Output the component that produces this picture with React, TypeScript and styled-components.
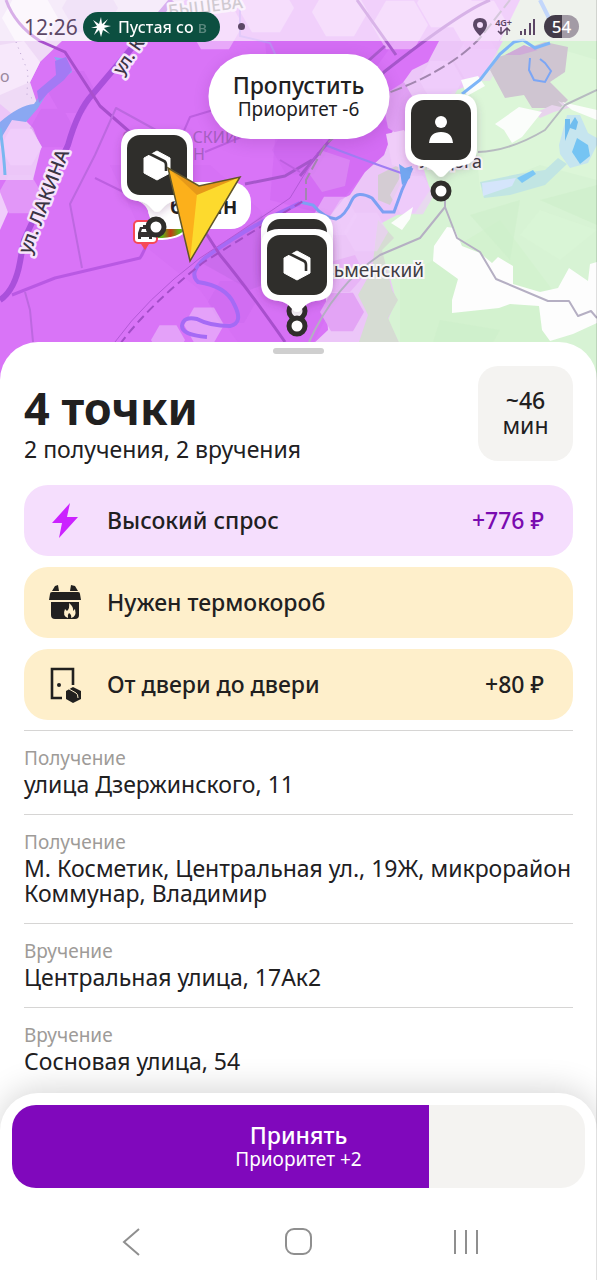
import React from "react";
import styled, { createGlobalStyle } from "styled-components";

const GlobalStyle = createGlobalStyle`
  * { box-sizing: border-box; }
  body { margin: 0; background: #fff; font-family: "Noto Sans", "Open Sans", sans-serif; color: #21201f; }
  button { font-family: inherit; color: inherit; border: 0; padding: 0; cursor: pointer; }
  h1, h2, p, ul, dl, dd { margin: 0; padding: 0; }
`;

const Page = styled.div`
  position: relative;
  display: flex;
  flex-direction: column;
  min-height: 100vh;
  background: #fff;

  &::after {
    content: "";
    position: absolute;
    inset: 0 0 0 auto;
    width: 1px;
    background: rgba(0, 0, 0, 0.12);
  }
`;

const MapArea = styled.header`
  position: relative;
  height: 384px;
  overflow: hidden;
  background: #d7f3d4;
`;

const MapCanvas = styled.svg`
  display: block;
  width: 100%;
  height: 100%;
  font-family: "Noto Sans", sans-serif;
`;

const StatusBar = styled.div`
  position: absolute;
  inset: 0 0 auto 0;
  height: 41px;
  display: flex;
  align-items: center;
  padding: 12px 18px 0 24px;
  background: rgba(255, 255, 255, 0.55);
  color: #5c4766;
`;

const Clock = styled.time`
  font-size: 21px;
  line-height: 28px;
  width: 59px;
  white-space: nowrap;
`;

const RidePill = styled.div`
  display: flex;
  align-items: center;
  gap: 7px;
  width: 137px;
  height: 30px;
  padding: 0 8px;
  border-radius: 15px;
  background: #0c4f40;
  color: #fff;
  font-size: 16px;
  font-weight: 500;
  white-space: nowrap;
`;

const PillText = styled.span`
  background: linear-gradient(to right, #fff 86%, #5b877d 88%);
  background-clip: text;
  color: transparent;
`;

const Dot = styled.span`
  width: 7px;
  height: 7px;
  margin-left: 18px;
  border-radius: 50%;
  background: #5c4766;
`;

const StatusIcons = styled.div`
  display: flex;
  align-items: center;
  gap: 8px;
  margin-left: auto;
`;

const Network = styled.span`
  display: flex;
  flex-direction: column;
  align-items: center;
  font-size: 9px;
  font-weight: 600;
  line-height: 9px;
`;

const Battery = styled.span`
  width: 35px;
  height: 23px;
  border-radius: 12px;
  background: linear-gradient(to right, #433c49 52%, #a29ba5 52%);
  color: #fff;
  font-size: 17px;
  font-weight: 500;
  line-height: 23px;
  text-align: center;
`;

const SkipButton = styled.button`
  position: absolute;
  top: 54px;
  left: 50%;
  transform: translateX(-50%);
  width: 181px;
  height: 85px;
  border-radius: 42px;
  background: #fff;
  box-shadow: 0 4px 16px rgba(80, 20, 100, 0.16);
`;

const ButtonTitle = styled.span`
  display: block;
  font-size: 23px;
  font-weight: 500;
  line-height: 25px;
`;

const ButtonNote = styled.span`
  display: block;
  font-size: 19px;
  line-height: 22px;
`;

const Sheet = styled.main`
  position: relative;
  flex: 1;
  margin-top: -42px;
  padding: 6px 24px 0;
  border-radius: 38px 38px 0 0;
  background: #fff;
`;

const Handle = styled.div`
  width: 51px;
  height: 6px;
  margin: 0 auto;
  border-radius: 3px;
  background: #cfcfcf;
`;

const Summary = styled.section`
  display: flex;
  justify-content: space-between;
  margin-top: 12px;
  height: 95px;
`;

const Title = styled.h1`
  padding-top: 15px;
  font-size: 45px;
  font-weight: 700;
  line-height: 54px;
`;

const Subtitle = styled.p`
  font-size: 23px;
  line-height: 28px;
`;

const TimeBox = styled.div`
  width: 95px;
  height: 95px;
  padding-top: 22px;
  border-radius: 20px;
  background: #f4f3f1;
  font-size: 23px;
  line-height: 25px;
  text-align: center;
`;

const Minutes = styled.div`
  font-weight: 500;
`;

const Banners = styled.ul`
  display: flex;
  flex-direction: column;
  gap: 11px;
  margin-top: 24px;
  list-style: none;
`;

const Banner = styled.li<{ $tone: "demand" | "notice" }>`
  display: flex;
  align-items: center;
  height: 71px;
  padding: 0 29px 2px 24px;
  border-radius: 24px;
  background: ${(p) => (p.$tone === "demand" ? "#f5defd" : "#feefcb")};
  font-size: 23px;
  font-weight: 500;
`;

const BannerIcon = styled.svg`
  width: 34px;
  height: 38px;
  margin-right: 25px;
`;

const Bonus = styled.span<{ $accent?: boolean }>`
  margin-left: auto;
  color: ${(p) => (p.$accent ? "#7a0bb0" : "inherit")};
`;

const Stops = styled.dl`
  margin-top: 10px;
`;

const Stop = styled.div`
  border-top: 1px solid #d6d5d4;
  padding: 14px 0 17px;
`;

const StopKind = styled.dt`
  color: #9e9b98;
  font-size: 19px;
  line-height: 27px;
`;

const StopAddress = styled.dd`
  font-size: 23px;
  line-height: 25px;
`;

const Footer = styled.footer`
  position: sticky;
  bottom: 0;
  padding: 12px 12px 0;
  border-radius: 38px 38px 0 0;
  background: #fff;
  box-shadow: 0 -4px 32px rgba(0, 0, 0, 0.16);
`;

const AcceptButton = styled.button<{ $progress: number }>`
  width: 100%;
  height: 83px;
  border-radius: 24px;
  background: linear-gradient(to right, #8008bc ${(p) => p.$progress}%, #f4f3f1 ${(p) => p.$progress}%);
  && { color: #fff; }
`;

const SystemNav = styled.nav`
  display: flex;
  justify-content: space-between;
  align-items: center;
  height: 92px;
  padding: 16px 104px 0;
`;

const NavButton = styled.button`
  display: flex;
  width: 32px;
  height: 32px;
  background: none;
`;

const hex = (x: number, y: number, r = 30) =>
  [
    [x - r, y],
    [x - r / 2, y - r * 0.87],
    [x + r / 2, y - r * 0.87],
    [x + r, y],
    [x + r / 2, y + r * 0.87],
    [x - r / 2, y + r * 0.87],
  ]
    .map((p) => p.join(","))
    .join(" ");

const Parcel = ({ x, y }: { x: number; y: number }) => (
  <g transform={`translate(${x} ${y})`}>
    <path d="M-13 -7L0 -14L13 -7V8L0 15L-13 8Z" fill="#fff" stroke="#fff" strokeWidth="1" strokeLinejoin="round" />
    <path d="M-9 -12L7 -4Q9 -3 9 0V6" fill="none" stroke="#2f2e2b" strokeWidth="2.6" />
  </g>
);

const Pin = ({ x, y }: { x: number; y: number }) => (
  <g transform={`translate(${x} ${y})`}>
    <path
      d="M-18 -36H18Q36 -36 36 -18V18Q36 35 18 36Q10 37 4 45Q0 49 -4 45Q-10 37 -18 36Q-36 35 -36 18V-18Q-36 -36 -18 -36Z"
      fill="#fff"
      filter="url(#pinShadow)"
    />
    <rect x="-30" y="-30" width="60" height="60" rx="13" fill="#2f2e2b" />
  </g>
);

const MapDrawing = () => (
  <MapCanvas viewBox="0 0 597 384" preserveAspectRatio="xMidYMin slice" role="img" aria-label="Карта">
    <defs>
      <filter id="pinShadow" x="-30%" y="-30%" width="160%" height="160%">
        <feDropShadow dx="0" dy="3" stdDeviation="4" floodColor="#401050" floodOpacity="0.2" />
      </filter>
      <linearGradient id="traffic" x1="0" x2="1">
        <stop offset="0.3" stopColor="#5cb518" />
        <stop offset="0.55" stopColor="#c33a12" />
        <stop offset="0.8" stopColor="#5cb518" />
      </linearGradient>
    </defs>

    <rect width="597" height="384" fill="#d7f3d4" />
    <path d="M480 190L540 165L597 180V60L530 40L470 80Z" fill="#dcf6d8" />
    <path d="M400 280L500 220L560 300L540 384H400Z" fill="#d3f2cf" />
    <path d="M470 215L520 200L510 260ZM540 200L597 185V225ZM440 320L500 330L470 384H420Z" fill="#cdefca" opacity="0.6" />

    <path d="M0 0H497L510 28L498 50L482 78L462 88L452 92L425 125L415 140L430 190L415 213L397 215L378 225L375 245L388 270L396 300L388 320L400 345V384H0Z" fill="#ecc6f8" />
    <path d="M378 220L394 238L382 250L392 290L398 300L388 318L400 345L392 384H350L358 345L368 315L358 295L372 270Z" fill="#d6dcd3" />
    <path d="M378 175L398 165L400 185L390 205L378 200Z" fill="#d4ccd3" />

    <path d="M40 41L62 41L439 41L428 62L412 70L402 84L390 92L386 110L393 130L384 155L365 172L350 195L340 200L330 216L325 285L328 330L312 345V384H0V180L33 180L41 148L33 128L20 115L30 82L40 62Z" fill="#d974f7" />
    <path d="M265 41L395 41L360 90L393 130L384 155L365 172L330 216L270 200L275 140Z" fill="#ce65f0" opacity="0.4" />
    <path d="M110 165L210 165L260 210L300 290L330 310L312 345H240L200 290L150 250Z" fill="#cf69f0" opacity="0.25" />
    <path d="M200 262L262 215L275 280L250 290Z" fill="#bb66e0" opacity="0.4" />
    <g fill="#c764ea" opacity="0.3">
      <polygon points={hex(72, 92, 24)} />
      <polygon points={hex(52, 128, 22)} />
      <polygon points={hex(300, 150, 28)} />
      <polygon points={hex(232, 302, 24)} />
    </g>
    <g fill="#f0cdfb">
      <polygon points={hex(21, 147, 21)} />
      <polygon points={hex(20, 194, 22)} opacity="0.4" />
      <polygon points="0,192 8,212 0,230" />
      <polygon points={hex(441, 80, 22)} opacity="0.8" />
      <polygon points={hex(478, 60, 24)} opacity="0.5" />
      <polygon points={hex(335, 216, 22)} opacity="0.55" />
      <polygon points={hex(366, 232, 22)} opacity="0.6" />
      <polygon points={hex(412, 195, 22)} opacity="0.7" />
      <polygon points={hex(204, 325, 20)} opacity="0.5" />
      <polygon points={hex(168, 340, 17)} opacity="0.5" />
    </g>
    <path d="M388 92L404 82L420 110L404 138L388 128L384 108Z" fill="#e0a0f3" />
    <path d="M386 134L404 130L420 155L415 172L392 165Z" fill="#f0cdf9" />
    <path d="M320 150L350 160L345 186L322 192L308 172Z" fill="#dd92f3" opacity="0.6" />
    <polygon points={hex(342, 312, 22)} fill="#e3a4f5" />
    <path d="M330 262L355 255L365 275L350 292H330Z" fill="#e8b5f6" />
    <path d="M0 0H185L150 41H0Z" fill="#ead5f4" />
    <polygon points={hex(30, 18, 28)} fill="#fbf4fd" opacity="0.8" />
    <polygon points={hex(90, 8, 28)} fill="#ddb8ee" opacity="0.7" />
    <path d="M0 41H62L40 62L30 82L37 103L17 118L0 104Z" fill="#efdaf6" />
    <path d="M0 45L24 41L40 62L30 82L0 95Z" fill="#f7e8fb" />
    <path d="M185 0H520V41H150Z" fill="#e098f7" />
    <g fill="#f0c6fb" opacity="0.65">
      <polygon points={hex(215, 25, 28)} />
      <polygon points={hex(266, 8, 28)} />
      <polygon points={hex(340, 12, 28)} />
      <polygon points={hex(400, 25, 28)} />
      <polygon points={hex(445, 3, 28)} />
      <polygon points={hex(480, 25, 28)} />
    </g>
    <path d="M520 0H597V41H500Z" fill="#d9e3d6" />

    <path d="M498 57L522 50L545 42L568 47L565 72L550 82L568 100L560 108H532L524 95L505 98L490 70Z" fill="#cfc5d1" />
    <path d="M505 55L524 45L538 50L520 55Z" fill="#cfabd8" />
    <path d="M461 80L478 76L485 86L467 96Z" fill="#fbfdfb" />
    <path d="M535 113L552 105L565 108L558 101L572 107L554 112L540 118Z" fill="#e8d4ed" />
    <path d="M495 124L519 107L542 112L522 137L512 143L504 130Z" fill="#fbfdfb" />
    <path d="M562 102L597 110V120L572 110Z" fill="#fbfdfb" />
    <path d="M391 223L413 207L410 219L402 230Z" fill="#fbfdfb" />
    <path d="M447 227L454 228L462 246L480 253L492 263L498 257L513 266V284L540 292L558 288L569 268L588 281L590 264L597 262V323L573 334L550 341L542 330L539 306L510 304L499 308L452 313V300L458 279L433 261L434 246Z" fill="#fdfdfd" />
    <path d="M597 230L540 210L520 235L560 260Z" fill="#daf5d6" opacity="0.8" />

    <g fill="none" stroke="#7ba6f5" strokeWidth="3">
      <path d="M462 94L480 80L500 54L514 42L523 40L535 48L550 43" stroke="#7db5f8" />
      <path d="M540 0L550 20" strokeWidth="4" />
      <path d="M530 58L529 70L534 80L545 82L551 71L545 63L540 59" strokeWidth="2" />
      <path d="M412 168L402 190L394 212H383L372 198Q357 190 352 200Q345 216 336 219Q324 218 313 205L300 202" stroke="#7da0f3" />
      <path d="M325 145Q358 158 404 174" stroke="#a07df3" strokeWidth="2" />
      <path d="M240 0V36L270 43L278 60" stroke="#bf8bf3" strokeWidth="2" />
    </g>
    <g fill="none" stroke="#a56af5" strokeWidth="4">
      <path d="M300 203Q245 228 205 258Q188 273 198 282Q226 286 234 304Q244 323 230 326Q210 326 197 319Q183 316 182 326Q182 335 207 337" />
    </g>
    <path d="M0 122Q20 105 34 104L46 87L64 72L54 57L66 59L72 72L66 76L50 88L38 108L26 122L12 120L0 140Z" fill="#8aa8f2" />
    <path d="M66 57L72 70L64 80L48 93L39 103L37 91L56 75L55 61Z" fill="#a37af4" />
    <path d="M0 128Q4 155 5 175" fill="none" stroke="#79b7f0" strokeWidth="3" />
    <path d="M399 164L405 168L412 166L410 178L402 185Z" fill="#73a6f0" />

    <path d="M559 145L567 115L580 115L588 133L597 138V145L588 163L570 168L560 154Z" fill="#c6e5ef" />
    <path d="M565 119H570V125L575 117L578 122L576 130L570 128L565 141Z" fill="#70bdef" />
    <path d="M577 138L588 145L590 156L580 164L572 152Z" fill="#75c4f3" />
    <path d="M480 182L518 174L545 170L558 158L567 164L545 185L510 195L484 198Z" fill="#c1e5e3" />
    <path d="M482 183L516 178L512 186L483 196Z" fill="#d5e5fb" />
    <path d="M517 178L533 170L536 174L522 183Z" fill="#7cc7f5" />

    <g fill="none" strokeLinejoin="round">
      <path d="M0 300Q15 290 20 262L24 240Q45 195 68 145Q78 110 92 95L130 50L172 0" stroke="#aa50db" strokeWidth="6" />
      <path d="M6 0Q15 25 40 41L65 52L100 106L155 154L220 255Q245 285 285 342" stroke="#a84fcd" strokeWidth="3" />
      <path d="M12 295L55 278L140 258Q149 245 149 225" stroke="#b959e3" strokeWidth="3" />
      <path d="M82 268L70 204L95 155L116 108L165 135M25 292L30 310L33 342" stroke="#bd68e0" strokeWidth="2" />
      <path d="M300 176L330 140L384 72Q460 12 490 0M245 184L285 176L312 160" stroke="#a656cb" strokeWidth="3" />
      <path d="M357 0L396 55M358 70L385 46" stroke="#aa5acd" strokeWidth="3" />
      <path d="M280 160L300 172M180 140L190 117L240 102M205 152L270 125M95 178L160 210" stroke="#bd5fe0" strokeWidth="2" />
      <path d="M115 342Q145 300 200 258Q255 222 290 198L318 152" stroke="#b359d7" strokeWidth="1" />
      <path d="M120 344Q150 304 204 262Q255 230 305 200" stroke="#a34dc8" strokeWidth="2" strokeDasharray="9 5" />
      <path d="M306 200V180L325 145L388 93Q450 70 480 38L510 0" stroke="#a286af" strokeWidth="2" strokeDasharray="12 4" />
      <path d="M478 152Q510 151 545 130L565 105L597 90" stroke="#b7bbc0" strokeWidth="2" />
      <path d="M445 190V207L420 238L380 255Q335 285 309 342M445 207L457 238L480 252L496 279L548 301H569L578 316L591 311L597 318" stroke="#b5afc3" strokeWidth="2" />
      <path d="M16 42L28 72L27 95L38 102" stroke="#b8a1cf" strokeWidth="1" strokeDasharray="1 5" />
    </g>

    <g fontSize="18" fontWeight="500" fill="#3b3444" stroke="#f6e4fb" strokeWidth="5" paintOrder="stroke" strokeLinejoin="round">
      <text transform="translate(30 255) rotate(-69)" fontSize="19">ул. ЛАКИНА</text>
      <text transform="translate(122 76) rotate(-55)">ул. К</text>
      <text transform="translate(169 17) rotate(-7)" fontSize="17" fill="#978999">БЫШЕВА</text>
    </g>
    <g fill="#a65fc2" fontSize="16">
      <text x="237" y="143" textAnchor="end">ОКТЯБРЬСКИЙ</text>
      <text x="205" y="160" textAnchor="end">РАЙОН</text>
      <text x="0" y="82" fill="#9b889f">о</text>
    </g>
    <g fontSize="19" fill="#403c43" stroke="#f8f6f8" strokeWidth="4" paintOrder="stroke" textAnchor="end">
      <text x="424" y="277">Кузьменский</text>
      <text x="482" y="168" fontSize="18">Ладога</text>
    </g>

    <path d="M152 239Q180 240 186 229L165 225Z" fill="url(#traffic)" stroke="#fff" strokeWidth="2" />
    <rect x="134" y="221" width="23" height="22" rx="4" fill="#fff" stroke="#f64956" strokeWidth="2" />
    <path d="M141 244L145 250L149 244Z" fill="#f64956" />
    <path d="M138 239V233L140 227H150L152 233V239H149V237H141V239ZM142 229L141 232H149L148 229ZM143 225H147V227H143Z" fill="#35302f" fillRule="evenodd" />

    <rect x="148" y="182" width="103" height="47" rx="20" fill="#fff" />
    <text x="170" y="214" fontSize="23" fontWeight="600" fill="#21201f">6 мин</text>
    <path d="M130 199Q146 201 149 214L156 222L165 200H180L180 185H140Z" fill="#fff" />
    <Pin x={157} y={165} />
    <Parcel x={157} y={165} />
    <Pin x={441} y={130} />
    <circle cx="441" cy="122" r="6" fill="#fff" />
    <path d="M429 143Q430 132 441 132Q452 132 453 143Z" fill="#fff" />
    <Pin x={297} y={249} />
    <g fill="#fff" stroke="#2f2e2b" strokeWidth="5">
      <circle cx="156" cy="227" r="8" />
      <circle cx="441" cy="191" r="8" />
      <circle cx="297" cy="311" r="8" />
      <circle cx="297" cy="326" r="8" />
    </g>
    <Pin x={297} y={265} />
    <Parcel x={297} y={265} />

    <path d="M168 168L199 186L240 177L190 261Z" fill="#fdda2d" />
    <path d="M168 168L197 194L190 261Z" fill="#fcb01b" />
    <path d="M168 168L199 186L240 177L197 195Z" fill="#e69919" />
    <path d="M168 168L199 186L240 177L190 261Z" fill="none" stroke="#615629" strokeWidth="1.5" />
  </MapCanvas>
);

const ServiceStar = () => (
  <svg width="20" height="20" viewBox="0 0 20 20" aria-hidden="true">
    <path d="M10 0L11 7L17 2L13 8L20 9L13 11L19 17L12 13L10 20L8 13L3 18L6 11L0 11L6 9L2 3L8 7Z" fill="#fff" />
  </svg>
);

const BoltIcon = () => (
  <BannerIcon viewBox="0 0 34 38" aria-hidden="true">
    <path d="M22 2L4 22H14L11 37L30 16H19Z" fill="#cb22ff" />
  </BannerIcon>
);

const ThermoIcon = () => (
  <BannerIcon viewBox="0 0 34 38" aria-hidden="true">
    <path d="M4 8L7 3L10 2L11 8ZM23 2L27 3L30 8H22Z" fill="#21201f" />
    <path d="M4 9H30Q32 9 32 11L33 17H1L2 11Q2 9 4 9Z" fill="#21201f" />
    <path d="M3 19H31V32Q31 36 27 36H7Q3 36 3 32Z" fill="#21201f" />
    <path d="M21 20Q26 24 25 28L27 26Q29 34 23 35Q24 32 21 30Q19 32 20 35Q14 33 17 26L19 28Q22 25 21 20Z" fill="#feefcb" />
  </BannerIcon>
);

const DoorIcon = () => (
  <BannerIcon viewBox="0 0 34 38" aria-hidden="true">
    <path d="M25 20V4H4V33H14" fill="none" stroke="#21201f" strokeWidth="2.6" />
    <circle cx="11" cy="20" r="2" fill="#21201f" />
    <path d="M18 26L25 22L33 26V34L25 38L18 34Z" fill="#21201f" />
    <path d="M21 24L28 28Q30 29 30 33" fill="none" stroke="#feefcb" strokeWidth="1" />
  </BannerIcon>
);

const stops = [
  { kind: "Получение", address: "улица Дзержинского, 11" },
  { kind: "Получение", address: "М. Косметик, Центральная ул., 19Ж, микрорайон Коммунар, Владимир" },
  { kind: "Вручение", address: "Центральная улица, 17Ак2" },
  { kind: "Вручение", address: "Сосновая улица, 54" },
];

export default function App() {
  return (
    <Page>
      <GlobalStyle />
      <MapArea>
        <MapDrawing />
        <StatusBar>
          <Clock>12:26</Clock>
          <RidePill>
            <ServiceStar />
            <PillText>Пустая со в</PillText>
          </RidePill>
          <Dot />
          <StatusIcons>
            <svg width="14" height="18" viewBox="0 0 14 18" aria-hidden="true">
              <path d="M7 0Q14 0 14 7Q14 11 7 18Q0 11 0 7Q0 0 7 0ZM7 4A3 3 0 1 0 7 10A3 3 0 1 0 7 4Z" fill="#5c4766" fillRule="evenodd" />
            </svg>
            <Network>
              4G+
              <svg width="14" height="8" viewBox="0 0 14 8" aria-hidden="true">
                <path d="M4 0V7M1 4L4 7L7 4M10 8V1M7 4L10 1L13 4" fill="none" stroke="#5c4766" strokeWidth="1.5" />
              </svg>
            </Network>
            <svg width="16" height="16" viewBox="0 0 16 16" aria-hidden="true">
              <path d="M1 12V16M5 10V16M10 4V16M14 0V16" stroke="#5c4766" strokeWidth="2" />
            </svg>
            <Battery>54</Battery>
          </StatusIcons>
        </StatusBar>
        <SkipButton type="button">
          <ButtonTitle>Пропустить</ButtonTitle>
          <ButtonNote>Приоритет -6</ButtonNote>
        </SkipButton>
      </MapArea>

      <Sheet>
        <Handle />
        <Summary>
          <div>
            <Title>4 точки</Title>
            <Subtitle>2 получения, 2 вручения</Subtitle>
          </div>
          <TimeBox>
            <Minutes>~46</Minutes>
            мин
          </TimeBox>
        </Summary>

        <Banners>
          <Banner $tone="demand">
            <BoltIcon />
            Высокий спрос
            <Bonus $accent>+776 ₽</Bonus>
          </Banner>
          <Banner $tone="notice">
            <ThermoIcon />
            Нужен термокороб
          </Banner>
          <Banner $tone="notice">
            <DoorIcon />
            От двери до двери
            <Bonus>+80 ₽</Bonus>
          </Banner>
        </Banners>

        <Stops>
          {stops.map((stop) => (
            <Stop key={stop.address}>
              <StopKind>{stop.kind}</StopKind>
              <StopAddress>{stop.address}</StopAddress>
            </Stop>
          ))}
        </Stops>
      </Sheet>

      <Footer>
        <AcceptButton type="button" $progress={72.7}>
          <ButtonTitle>Принять</ButtonTitle>
          <ButtonNote>Приоритет +2</ButtonNote>
        </AcceptButton>
        <SystemNav>
          <NavButton type="button" aria-label="Назад">
            <svg width="32" height="32" viewBox="0 0 32 32">
              <path d="M23 3L8 16L23 29" fill="none" stroke="#8f8f8f" strokeWidth="2" />
            </svg>
          </NavButton>
          <NavButton type="button" aria-label="Домой">
            <svg width="32" height="32" viewBox="0 0 32 32">
              <rect x="3" y="3" width="25" height="25" rx="8" fill="none" stroke="#8f8f8f" strokeWidth="2" />
            </svg>
          </NavButton>
          <NavButton type="button" aria-label="Недавние приложения">
            <svg width="32" height="32" viewBox="0 0 32 32">
              <path d="M6 4V28M17 4V28M28 4V28" fill="none" stroke="#8f8f8f" strokeWidth="2" />
            </svg>
          </NavButton>
        </SystemNav>
      </Footer>
    </Page>
  );
}
